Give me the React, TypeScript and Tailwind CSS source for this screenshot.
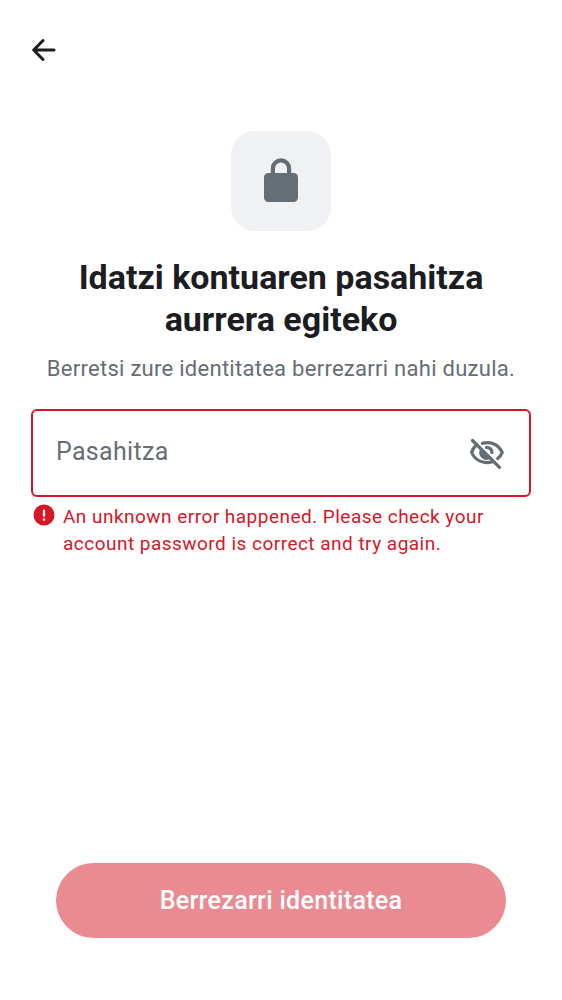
import React, { useState } from "react";

function BackIcon() {
  return (
    <svg
      viewBox="0 0 24 24"
      className="size-6"
      fill="none"
      stroke="currentColor"
      strokeWidth="3"
      strokeLinecap="round"
      strokeLinejoin="round"
      aria-hidden="true"
    >
      <path d="M22 12H2M11 2.500 1.700 12l9.300 9.500" />
    </svg>
  );
}

function LockIcon() {
  return (
    <svg viewBox="0 0 34 46" className="h-[46px] w-[34px]" aria-hidden="true">
      <path d="M8.900 17V10.400a8.100 8.100 0 0 1 16.200 0V17" fill="none" stroke="currentColor" strokeWidth="4.200" />
      <rect x="0" y="15" width="34" height="29" rx="4.500" fill="currentColor" />
    </svg>
  );
}

function EyeOffIcon() {
  return (
    <svg
      viewBox="0 0 38 38"
      className="size-[38px]"
      fill="none"
      stroke="currentColor"
      strokeWidth="3.200"
      strokeLinecap="round"
      aria-hidden="true"
    >
      <path d="M14.500 9.300C21.500 7.200 30 9.500 34.200 18.500c-1 2.600-2.700 4.600-4.500 6" />
      <path d="M8 11.500C5.900 13.200 4.500 15.500 3.700 18.500 7.500 27.500 17 30.100 24.500 27.700" />
      <path d="M18.500 13.300a5.200 5.200 0 0 1 5.500 5.200" />
      <path d="M12 15.500a7.200 7.200 0 0 0 9.800 9.500z" fill="currentColor" stroke="none" />
      <path d="M4.500 6.500 31.500 33.300" />
    </svg>
  );
}

function ErrorIcon() {
  return (
    <svg viewBox="0 0 22 22" className="mt-px size-[22px] shrink-0" aria-hidden="true">
      <circle cx="11" cy="11" r="10.500" fill="currentColor" />
      <path d="M11 6.700v5" stroke="#fff" strokeWidth="2.300" strokeLinecap="round" />
      <circle cx="11" cy="15.500" r="1.300" fill="#fff" />
    </svg>
  );
}

export default function App() {
  const [visible, setVisible] = useState(false);
  return (
    <main className="flex min-h-screen flex-col bg-white px-8 pt-[38px] pb-[62px] font-['Roboto',sans-serif] text-[#1b1d22]">
      <button type="button" aria-label="Back" className="self-start">
        <BackIcon />
      </button>
      <div className="mt-[69px] flex size-[100px] items-center justify-center self-center rounded-3xl bg-[#f0f1f5] text-[#656d77]">
        <LockIcon />
      </div>
      <h1 className="mt-[25px] text-center text-[34px] leading-[42px] font-bold">
        Idatzi kontuaren pasahitza
        <br />
        aurrera egiteko
      </h1>
      <p className="mt-[14px] text-center text-[22px] leading-[30px] tracking-[0.0125em] text-[#656d77]">
        Berretsi zure identitatea berrezarri nahi duzula.
      </p>
      <form className="flex grow flex-col" onSubmit={(e) => e.preventDefault()}>
        <div className="-mx-px mt-[25px] flex h-[88px] items-center rounded-md border-2 border-[#d71628] px-[23px] text-[#656d77]">
          <input
            type={visible ? "text" : "password"}
            aria-label="Pasahitza"
            aria-invalid="true"
            aria-describedby="password-error"
            placeholder="Pasahitza"
            className="min-w-0 grow bg-transparent pb-0.5 text-[25px] leading-9 tracking-[0.0125em] outline-none placeholder:text-[#656d77]"
          />
          <button type="button" aria-label="Show password" onClick={() => setVisible(!visible)}>
            <EyeOffIcon />
          </button>
        </div>
        <div id="password-error" className="mt-[6px] ml-px flex gap-2 text-[#d71628]">
          <ErrorIcon />
          <p className="text-[19px] leading-[27px] tracking-wide">
            An unknown error happened. Please check your account password is correct and try again.
          </p>
        </div>
        <button
          type="submit"
          className="mx-6 mt-auto h-[75px] rounded-full bg-[#ea8b92] text-[25px] font-medium tracking-[0.0125em] text-white"
        >
          Berrezarri identitatea
        </button>
      </form>
    </main>
  );
}
